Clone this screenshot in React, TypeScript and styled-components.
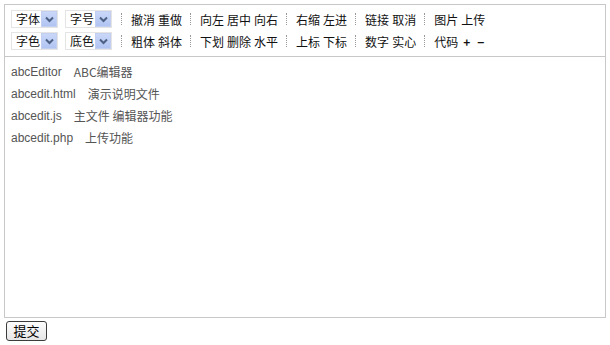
import React from 'react'
import styled, { createGlobalStyle } from 'styled-components'

const GlobalStyle = createGlobalStyle`
    body {
        margin: 0;
        background: #fff;
        font-family: "Noto Sans CJK SC", "Liberation Sans", sans-serif;
        font-size: 12px;
    }
`

type Group = Array<string>

const rowOne: Array<Group> = [['撤消', '重做'], ['向左', '居中', '向右'], ['右缩', '左进'], ['链接', '取消'], ['图片', '上传']]
const rowTwo: Array<Group> = [['粗体', '斜体'], ['下划', '删除', '水平'], ['上标', '下标'], ['数字', '实心'], ['代码', '+', '−']]

const files = [
    ['abcEditor', 'ABC编辑器'],
    ['abcedit.html', '演示说明文件'],
    ['abcedit.js', '主文件 编辑器功能'],
    ['abcedit.php', '上传功能']
]

const Picker: React.FunctionComponent<{ label: string }> = ({ label }) => (
    <SelectBox>
        <SelectLabel>{label}</SelectLabel>
        <ArrowBox>
            <svg width="9" height="7" viewBox="0 0 9 7">
                <path d="M1 1.5 L4.5 5 L8 1.5" fill="none" stroke="#4d6185" strokeWidth="2" />
            </svg>
        </ArrowBox>
    </SelectBox>
)

const ToolRow: React.FunctionComponent<{ first: string, second: string, groups: Array<Group> }> = ({ first, second, groups }) => (
    <Row>
        <Picker label={first} />
        <Picker label={second} />
        {groups.map((group, i) => (
            <React.Fragment key={i}>
                <Separator />
                <Group>
                    {group.map(item => (
                        <Tool key={item} bold={item === '+' || item === '−'}>{item}</Tool>
                    ))}
                </Group>
            </React.Fragment>
        ))}
    </Row>
)

export default function App() {
    return (
        <Page>
            <GlobalStyle />
            <Editor>
                <Toolbar>
                    <ToolRow first="字体" second="字号" groups={rowOne} />
                    <ToolRow first="字色" second="底色" groups={rowTwo} />
                </Toolbar>
                <Content>
                    {files.map(([name, desc]) => (
                        <Line key={name}>
                            <FileName>{name}</FileName>
                            <span>{desc}</span>
                        </Line>
                    ))}
                </Content>
            </Editor>
            <Submit>提交</Submit>
        </Page>
    )
}

const Page = styled.div`
    padding: 4px 4px 0 4px;
    width: 602px;
`
const Editor = styled.div`
    border: 1px solid #c8c8c8;
    display: flex;
    flex-direction: column;
`
const Toolbar = styled.div`
    display: flex;
    flex-direction: column;
    gap: 4px;
    padding: 5px 6px 6px 6px;
    border-bottom: 1px solid #c8c8c8;
`
const Row = styled.div`
    display: flex;
    align-items: center;
    height: 18px;
    gap: 6px;
`
const SelectBox = styled.div`
    display: flex;
    align-items: center;
    justify-content: space-between;
    box-sizing: border-box;
    width: 47px;
    height: 18px;
    border: 1px solid #e4e4e4;
    padding: 0 0 0 4px;
    color: #111;
    margin-right: 1px;
`
const SelectLabel = styled.span`
    line-height: 16px;
`
const ArrowBox = styled.span`
    display: flex;
    align-items: center;
    justify-content: center;
    width: 16px;
    height: 16px;
    background: linear-gradient(#c9d7f8, #b1c4f2);
    border: 1px solid #c2cff0;
    box-sizing: border-box;
`
const Separator = styled.span`
    width: 0;
    height: 12px;
    border-left: 1px dotted #999;
    margin: 0 3px 0 2px;
`
const Group = styled.div`
    display: flex;
    gap: 3px;
`
const Tool = styled.span<{ bold?: boolean }>`
    color: #111;
    font-weight: ${({ bold }) => (bold ? 700 : 400)};
    padding: ${({ bold }) => (bold ? '0 2px' : '0')};
`
const Content = styled.div`
    height: 252px;
    padding: 4px 6px;
    color: #555;
`
const Line = styled.div`
    line-height: 22px;
    display: flex;
    gap: 12px;
`
const FileName = styled.span`
    font-family: "Liberation Sans", sans-serif;
`
const Submit = styled.button`
    margin: 3px 0 0 2px;
    width: 41px;
    height: 20px;
    padding: 0;
    font-family: "Noto Sans CJK SC", sans-serif;
    font-size: 13px;
    line-height: 16px;
    color: #000;
    background: linear-gradient(#fdfdfd, #e6e6e6);
    border: 1px solid #3c3c3c;
    border-radius: 3px;
`
